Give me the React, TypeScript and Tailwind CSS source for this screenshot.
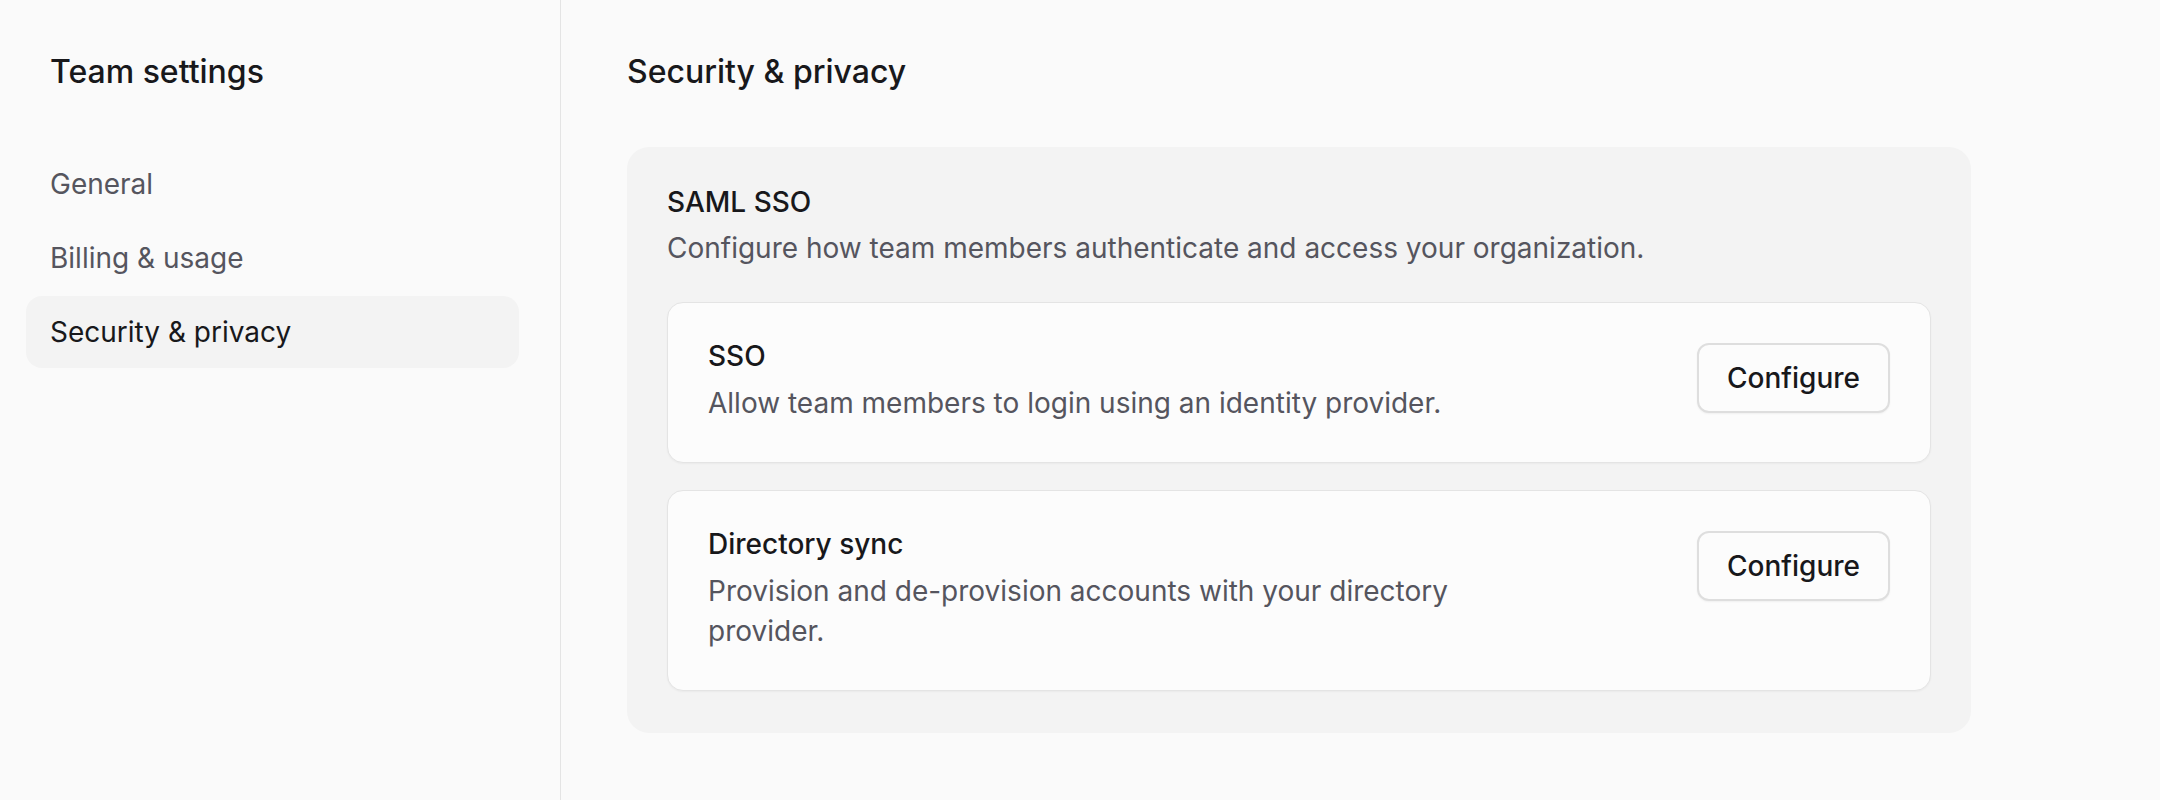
import React from 'react';

const navItems = [
  { label: 'General', active: false },
  { label: 'Billing & usage', active: false },
  { label: 'Security & privacy', active: true },
];

const options = [
  { title: 'SSO', text: 'Allow team members to login using an identity provider.' },
  { title: 'Directory sync', text: 'Provision and de-provision accounts with your directory provider.' },
];

const App = () => {
  return (
    <div className="flex min-h-screen bg-[#fafafa] font-['Inter',sans-serif] text-[#18181b]">
      <aside className="w-[561px] shrink-0 border-r border-[#e4e4e4] pl-[26px] pr-[41px] pt-[48px]">
        <h1 className="px-[24px] text-[32px] leading-[48px] font-medium">Team settings</h1>
        <nav className="mt-[52px] flex flex-col gap-[2px]">
          {navItems.map((item) => (
            <a
              key={item.label}
              href="#"
              className={
                item.active
                  ? 'flex h-[72px] items-center rounded-[16px] bg-[#f3f3f3] px-[24px] text-[28px] text-[#18181b]'
                  : 'flex h-[72px] items-center rounded-[16px] px-[24px] text-[28px] text-[#55555e]'
              }
            >
              {item.label}
            </a>
          ))}
        </nav>
      </aside>

      <main className="flex-1 pl-[66px] pt-[48px]">
        <div className="max-w-[1344px]">
          <h2 className="text-[32px] leading-[48px] font-medium">Security &amp; privacy</h2>

          <section className="mt-[51px] rounded-[22px] bg-[#f3f3f3] px-[40px] pt-[35px] pb-[42px]">
            <h3 className="text-[28px] leading-[40px] font-medium">SAML SSO</h3>
            <p className="mt-[6px] text-[28px] leading-[40px] text-[#55555e]">
              Configure how team members authenticate and access your organization.
            </p>

            <div className="mt-[34px] flex flex-col gap-[27px]">
              {options.map((opt) => (
                <div
                  key={opt.title}
                  className="flex items-start justify-between gap-8 rounded-[16px] border border-[#e4e4e4] bg-[#fcfcfc] px-[40px] pt-[33px] pb-[39px] shadow-[0_1px_2px_rgba(0,0,0,0.04)]"
                >
                  <div className="max-w-[768px]">
                    <h4 className="text-[28px] leading-[40px] font-medium">{opt.title}</h4>
                    <p className="mt-[7px] text-[28px] leading-[40px] text-[#55555e]">{opt.text}</p>
                  </div>
                  <button className="mt-[7px] flex h-[70px] items-center rounded-[12px] border-2 border-[#dedede] bg-[#fcfcfc] px-[28px] text-[28px] font-medium text-[#18181b] shadow-[0_1px_2px_rgba(0,0,0,0.05)]">
                    Configure
                  </button>
                </div>
              ))}
            </div>
          </section>
        </div>
      </main>
    </div>
  );
};

export default App;
